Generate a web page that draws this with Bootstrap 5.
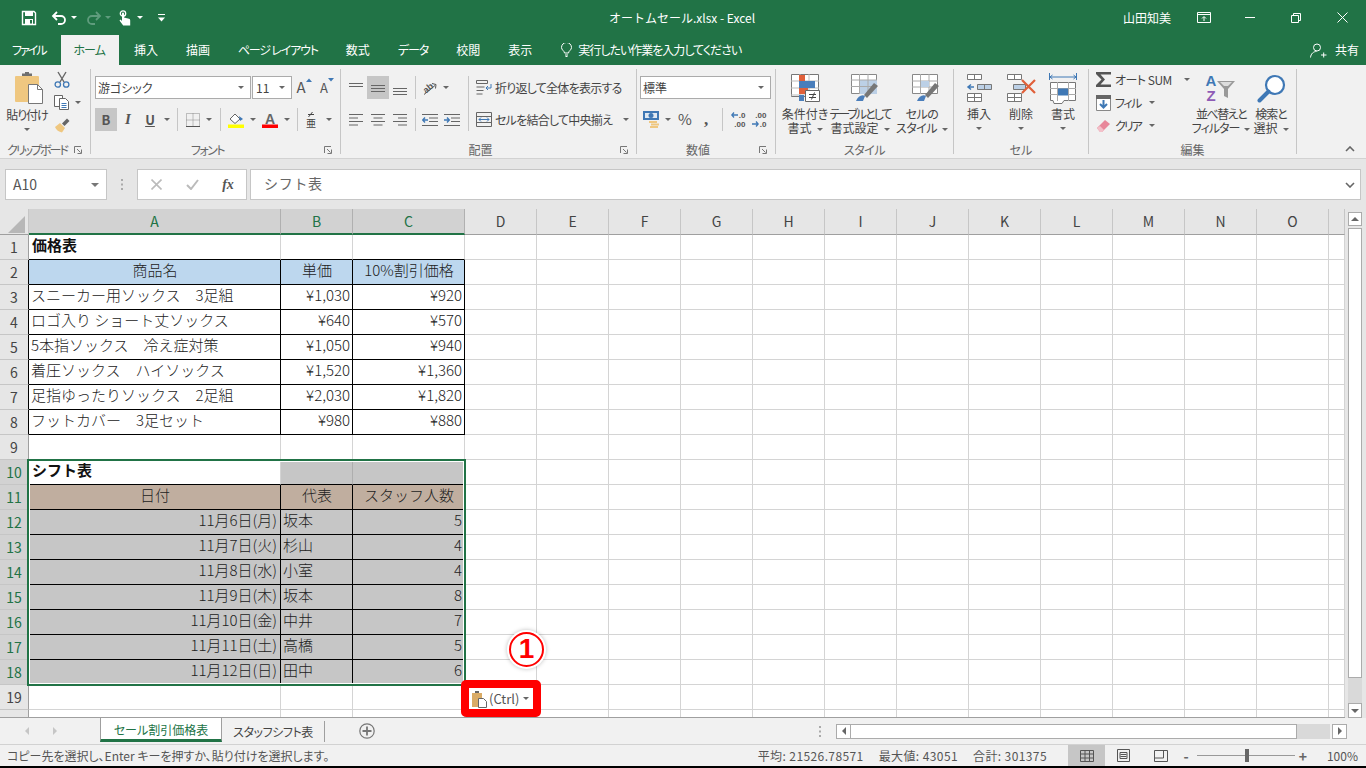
<!DOCTYPE html>
<html lang="ja">
<head>
  <meta charset="UTF-8" />
  <title>オートムセール.xlsx - Excel</title>
  <link href="https://cdn.jsdelivr.net/npm/bootstrap@5.3.3/dist/css/bootstrap.min.css" rel="stylesheet">
  <style>
    html, body { height: 100%; overflow: hidden; }
    body { font-family: "Noto Sans CJK JP", "Noto Sans", sans-serif; font-size: 12px; color: #444; background: #000; }
    svg { display: block; flex: none; }
    .palt { font-feature-settings: "palt"; }
    .ls05 { letter-spacing: -.5px; } .ls07 { letter-spacing: -.75px; } .ls1 { letter-spacing: -1px; }
    .ls12 { letter-spacing: -1.2px; } .ls15 { letter-spacing: -1.5px; } .ls2 { letter-spacing: -2px; }
    .xl-app { height: 766px; width: 1366px; }

    /* title bar + tabs */
    .xl-title { height: 35px; background: #217346; color: #fff; }
    .xl-title > * { flex: none; }
    .qat { width: 560px; padding-left: 20px; }
    .qm3 { margin-left: 3px; } .qm4 { margin-left: 4px; } .qm5 { margin-left: 5px; } .qm7 { margin-left: 7px; }
    .qm9 { margin-left: 9px; } .qm13 { margin-left: 13px; } .qm15 { margin-left: 15px; }
    .doc-name { width: 244px; text-align: center; font-size: 12px; }
    .user-name { margin-left: 319px; width: 48px; font-size: 12px; white-space: nowrap; }
    .win-btn { width: 46px; }
    .win-btn-first { margin-left: 16px; width: 34px; }
    .win-min { margin-left: 6px; }
    .xl-tabs { height: 30px; background: #217346; color: #fff; font-size: 12px; }
    .rtab { padding: 0 14px; line-height: 30px; white-space: nowrap; }
    .rtab-file { padding: 0 12px; margin-right: 3px; }
    .rtab-home { background: #f1f1f1; color: #217346; padding: 0 14px 0 13px; margin-right: 1px; }
    .tell-me { margin-left: 15px; }
    .tell-me svg { margin-right: 6px; }
    .share { margin-left: auto; padding-right: 7px; }

    /* ribbon */
    .ribbon { height: 93px; background: #f1f1f1; }
    .rsep { width: 1px; background: #c6c6c6; margin: 4px 0; flex: none; }
    .rg { flex: none; display: flex; flex-direction: column; height: 93px; }
    .rg-body { height: 77px; flex: none; display: flex; }
    .rg-tools { padding-top: 11px; }
    .rg-label { height: 16px; line-height: 16px; display: flex; color: #666; }
    .rg-label span { flex: 1; text-align: center; }
    .launch { width: 16px; display: flex; align-items: center; }
    .g-clip { width: 90px; } .g-font { width: 249px; } .g-align { width: 295px; } .g-num { width: 138px; }
    .g-style { width: 177px; } .g-cells { width: 134px; } .g-edit { width: 207px; }
    .num-pad { padding-left: 3px; }
    .tr { display: flex; height: 23px; align-items: center; }
    .tr + .tr { margin-top: 9px; }
    .ti { flex: none; display: flex; align-items: center; justify-content: center; height: 23px; }
    .ti-on { background: #c6c6c6; }
    .w8 { width: 8px; } .w10 { width: 10px; } .w11 { width: 11px; } .w12 { width: 12px; } .w14 { width: 14px; }
    .w18 { width: 18px; } .w20 { width: 20px; } .w22 { width: 22px; } .w24 { width: 24px; } .w25 { width: 25px; }
    .tcaret { width: 0; height: 0; border: 3px solid transparent; border-top: 3px solid #666; border-bottom: 0; flex: none; }
    .tcaret-w { border-top-color: #fff; }
    .tcaret-d { border-top-color: #5f9c7d; }
    .tc-lg { border-width: 4px; border-bottom: 0; border-top-color: #777; }
    .vs::after { content: ""; width: 1px; height: 23px; background: #c6c6c6; }
    .cbox { background: #fff; border: 1px solid #ababab; height: 23px; display: flex; align-items: center; justify-content: space-between; padding: 0 6px 0 2px; flex: none; }
    .cb-font { width: 156px; } .cb-size { width: 40px; margin-left: 1px; padding-left: 3px; } .cb-num { width: 131px; padding-left: 2px; }
    .t-bold { font-weight: 700; font-size: 13px; color: #555; }
    .t-it { font-style: italic; font-family: "Liberation Serif", serif; font-weight: 700; font-size: 15px; color: #555; }
    .t-un { text-decoration: underline; font-weight: 700; font-size: 13px; color: #555; }
    .t-big { font-size: 15px; color: #555; }
    .small-a { font-size: 13px; }
    .t-pct { font-size: 15px; color: #555; }
    .t-comma { font-family: "Liberation Serif", serif; font-weight: 700; font-size: 17px; color: #555; line-height: 1; }
    .deci { font-size: 8px; line-height: 9px; color: #555; font-family: "Liberation Sans", sans-serif; font-weight: 700; }
    .deci-ln { display: flex; align-items: center; justify-content: flex-end; gap: 1px; }
    .col-left { width: 123px; flex: none; }
    .mid-line { width: 1px; height: 55px; background: #c6c6c6; flex: none; }
    .col-wrap { padding-left: 7px; }
    .col-wrap .ti { gap: 3px; justify-content: flex-start; }
    .col-wrap .tcaret { margin-left: 8px; }
    .paste-col { width: 54px; flex: none; padding-top: 7px; display: flex; flex-direction: column; align-items: center; }
    .paste-ic { margin: 0 0 4px 4px; }
    .lbl { line-height: 14px; white-space: nowrap; text-align: center; }
    .lbl .tcaret { display: inline-block; vertical-align: middle; margin-left: 5px; }
    .bigb { flex: none; padding-top: 6px; display: flex; flex-direction: column; align-items: center; }
    .bigb-ic { height: 34px; display: flex; align-items: center; justify-content: center; margin-bottom: 2px; }
    .ic-r10 { margin-left: 10px; } .ic-r8 { margin-left: 8px; }
    .big58 { width: 58px; } .big52 { width: 52px; } .big72 { width: 72px; } .big42 { width: 42px; } .big50 { width: 50px; }
    .big-caret { display: flex; align-items: center; gap: 5px; height: 14px; }
    .small-col { padding-top: 3px; }
    .small-row { display: flex; align-items: center; height: 23px; }
    .cm6 { margin-left: 6px; }
    .edit-col { width: 107px; flex: none; padding: 3px 0 0 7px; }
    .edit-row { display: flex; align-items: center; height: 23px; gap: 4px; }
    .edit-row .tcaret { margin-left: 4px; }
    .collapse-arrow { margin: 81px 0 0 48px; }

    /* formula bar */
    .fbar { height: 51px; background: #e6e6e6; border-top: 1px solid #d2d2d2; padding: 10px 5px 9px; }
    .fbox { background: #fff; border: 1px solid #c6c6c6; height: 31px; display: flex; align-items: center; }
    .name-box { width: 102px; padding: 0 7px; justify-content: space-between; font-size: 14px; color: #555; }
    .fdots { width: 30px; display: flex; justify-content: center; }
    .fn-btns { width: 110px; }
    .fn-btns > * { width: 36px; display: flex; justify-content: center; }
    .fx { font-family: "Liberation Serif", serif; font-style: italic; font-weight: 700; font-size: 14px; color: #555; }
    .fn-input { flex: 1; margin-left: 3px; padding: 0 5px 0 13px; font-size: 14px; color: #666; justify-content: space-between; letter-spacing: .7px; }
    .fn-input span { padding-bottom: 3px; }

    /* sheet */
    .sheet-area { height: 509px; position: relative; overflow: hidden; background: #e6e6e6; }
    .sheet-scroll { width: 1345px; height: 509px; overflow: hidden; background: #fff; border-bottom: 1px solid #9f9f9f; flex: none; }
    .xl-grid { table-layout: fixed; border-collapse: separate; border-spacing: 0; width: 1345px; font-size: 15px; color: #222; }
    .xl-grid th, .xl-grid td { box-sizing: border-box; height: 25px; padding: 0 1px 4px 2px; line-height: 20px; font-weight: 300; white-space: nowrap; overflow: hidden; vertical-align: middle;
      border-right: 1px solid #d4d4d4; border-bottom: 1px solid #d4d4d4; }
    .xl-grid td.text-end { padding-right: 2px; }
    .xl-grid td.dt { padding-right: 3px; }
    .xl-grid tr.colhead th { height: 26px; background: #e6e6e6; color: #444; text-align: center; font-size: 14px; border-right-color: #c6c6c6; border-bottom-color: #9f9f9f; padding: 0; line-height: 23px; font-weight: 400; }
    .xl-grid th.corner { width: 29px; padding: 0; }
    .corner-tri { width: 0; height: 0; border-left: 17px solid transparent; border-bottom: 17px solid #b7b7b7; margin: 5px 0 0 8px; }
    .xl-grid tr.colhead th.ch-on { background: #d2d2d2; color: #217346; border-right-color: #b0b0b0; border-bottom: 2px solid #217346; }
    .cw-a { width: 252px; } .cw-b { width: 72px; } .cw-c { width: 112px; } .cw-n { width: 72px; } .cw-p { width: 16px; }
    .xl-grid .rh { background: #e6e6e6; text-align: center; font-size: 14px; color: #444; padding: 0; line-height: 23px; font-weight: 400; border-right-color: #9f9f9f; border-bottom-color: #c6c6c6; }
    .xl-grid .rh-on { background: #d2d2d2; color: #217346; }
    .xl-grid .rh-edge { border-right-color: #000; }
    .xl-grid td.rest { background: repeating-linear-gradient(90deg, transparent 0 71px, #d4d4d4 71px 72px); border-right: 1px solid #d4d4d4; padding: 0; }
    .xl-grid .bk { border-right-color: #000; border-bottom-color: #000; }
    .xl-grid .bk-b { border-bottom-color: #000; }
    .bg-hd1 { background: #bdd7ee; }
    .bg-hd2 { background: #c0ae9f; }
    .bg-sel { background: #c6c6c6; }
    .xl-grid td.sel-line { border-right-color: #aeaeae; border-bottom-color: #000; }
    .xl-grid td.tb { font-weight: 700; color: #111; padding-left: 3px; }
    .sel-box { position: absolute; left: 27px; top: 250px; width: 439px; height: 227px; border: 2px solid #217346; box-shadow: inset 0 0 0 1px #fff; pointer-events: none; }
    .paste-btn { position: absolute; left: 461px; top: 471px; width: 80px; height: 37px; background: #fff; border: 8px solid #f00; border-radius: 5px; display: flex; align-items: center; gap: 2px; padding: 0 0 0 3px; font-size: 13px; color: #555; }
    .paste-btn .tcaret { margin-left: 2px; }
    .step-mark { position: absolute; left: 507px; top: 421px; width: 39px; height: 39px; border-radius: 50%; background: #fff; box-shadow: 0 0 4px rgba(0,0,0,.25); display: flex; align-items: center; justify-content: center; }
    .step-in { width: 35px; height: 35px; border-radius: 50%; border: 2px solid #f00; color: #f00; font-family: "Liberation Sans", sans-serif; font-weight: 700; font-size: 28px; line-height: 30px; text-align: center; }
    .vscroll { width: 21px; height: 509px; background: #e6e6e6; padding: 3px 4px 0 3px; flex: none; }
    .vs-btn { height: 14px; background: #fff; border: 1px solid #ababab; display: flex; align-items: center; justify-content: center; }
    .vs-thumb { height: 450px; background: #fff; border: 1px solid #ababab; margin-top: 2px; }
    .vs-rest { height: 25px; background: #d9d9d9; }
    .vs-end { height: 15px; }
    .tri-up { width: 0; height: 0; border: 4px solid transparent; border-bottom: 4px solid #666; border-top: 0; }
    .tri-dn { width: 0; height: 0; border: 4px solid transparent; border-top: 4px solid #666; border-bottom: 0; }
    .tri-l { width: 0; height: 0; border: 4px solid transparent; border-right: 4px solid #666; border-left: 0; }
    .tri-r { width: 0; height: 0; border: 4px solid transparent; border-left: 4px solid #666; border-right: 0; }

    /* sheet tabs */
    .stabs { height: 27px; background: #f1f1f1; border-bottom: 1px solid #d2d2d2; }
    .stab-nav { width: 100px; padding-left: 25px; gap: 24px; }
    .stab-nav .tri-l { border-right-color: #c6c6c6; } .stab-nav .tri-r { border-left-color: #c6c6c6; }
    .stab-on { width: 122px; height: 24px; align-self: flex-start; background: #fff; color: #217346; border: 1px solid #9f9f9f; border-top: 0; border-bottom: 3px solid #217346; text-align: center; line-height: 23px; }
    .stab-off { width: 103px; text-align: center; border-right: 1px solid #9f9f9f; height: 21px; line-height: 21px; letter-spacing: -.4px; }
    .stab-add { margin-left: 34px; }
    .dots-h { margin-left: 435px; margin-right: 6px; width: 20px; }
    .hscroll { width: 511px; height: 15px; background: #d9d9d9; }
    .hs-btn { width: 15px; height: 15px; background: #fff; border: 1px solid #ababab; display: flex; align-items: center; justify-content: center; flex: none; }
    .hs-thumb { width: 446px; height: 15px; background: #fff; border: 1px solid #ababab; border-left: 0; }
    .hs-track { width: 33px; }
    .hs-gap { width: 2px; background: #f1f1f1; height: 15px; }

    /* status bar */
    .sbar { height: 21px; background: #f1f1f1; padding-left: 7px; font-size: 12px; color: #555; }
    .stat-right { margin-left: auto; }
    .stat-t { letter-spacing: .4px; }
    .stat-v { margin-left: 15px; }
    .view-btn { width: 37px; height: 21px; display: flex; align-items: center; justify-content: center; }
    .view-on { background: #c6c6c6; margin-left: 21px; }
    .zoom-track { width: 98px; height: 1px; background: #999; position: relative; margin: 0 1px 0 4px; }
    .zoom-thumb { position: absolute; left: 48px; top: -6px; width: 4px; height: 13px; background: #666; }
    .zoom-val { width: 49px; text-align: right; padding-right: 8px; margin-left: 7px; }
    .sgn { width: 14px; text-align: center; font-weight: 700; font-size: 14px; color: #666; line-height: 1; }
  </style>
</head>
<body>
<div class="xl-app d-flex flex-column">

  <!-- title bar -->
  <div class="xl-title d-flex align-items-center">
    <div class="qat d-flex align-items-center">
      <svg width="18" height="16" viewBox="0 0 16 16" fill="none" stroke="#fff"><path d="M1.5 1.5h11.5l1.5 1.5v11.5h-13z" stroke-width="1.4"/><path d="M4 2h8v4H4z" fill="#fff" stroke="none"/><path d="M4 9h8v5.5H4z" fill="#fff" stroke="none"/><path d="M9 10h2v3.5H9z" fill="#217346" stroke="none"/></svg>
      <svg class="qm13" width="16" height="14" viewBox="0 0 16 14" fill="none" stroke="#fff" stroke-width="1.8"><path d="M6 1L2 5l4 4M2 5h8a4 4 0 0 1 0 8H7"/></svg>
      <span class="tcaret qm4 tcaret-w"></span>
      <svg class="qm9" width="16" height="14" viewBox="0 0 16 14" fill="none" stroke="#5f9c7d" stroke-width="1.8"><path d="M10 1l4 4-4 4M14 5H6a4 4 0 0 0 0 8h3"/></svg>
      <span class="tcaret qm3 tcaret-d"></span>
      <svg class="qm7" width="14" height="16" viewBox="0 0 14 16" fill="#fff"><circle cx="5" cy="3.5" r="2.7" fill="none" stroke="#fff" stroke-width="1.3"/><path d="M4 3.5a1 1 0 0 1 2 0v4l5 1.2a1.5 1.5 0 0 1 1.2 1.5V15.5H5.2L1.5 10.5l1-1L4 11z"/></svg>
      <span class="tcaret qm5 tcaret-w"></span>
      <svg class="qm15" width="7" height="8" viewBox="0 0 7 8" fill="#fff"><path d="M0 0h7v1H0zM0 3.5h7L3.5 7.5z"/></svg>
    </div>
    <div class="doc-name">オートムセール.xlsx - Excel</div>
    <div class="user-name">山田知美</div>
    <div class="win-btn win-btn-first d-flex justify-content-center">
      <svg width="14" height="11" viewBox="0 0 14 11" fill="none" stroke="#fff"><path d="M.5.500h13v10H.500zM.5 2.500h13M7 9V5M5 6.500L7 4.500l2 2"/></svg>
    </div>
    <div class="win-btn win-min d-flex justify-content-center"><svg width="10" height="2" viewBox="0 0 10 2"><path d="M0 .5h10" stroke="#fff"/></svg></div>
    <div class="win-btn d-flex justify-content-center"><svg width="10" height="10" viewBox="0 0 10 10" fill="none" stroke="#fff"><path d="M.5 2.500h7v7h-7zM2.500 2.500v-2h7v7h-2"/></svg></div>
    <div class="win-btn d-flex justify-content-center"><svg width="11" height="11" viewBox="0 0 11 11" fill="none" stroke="#fff"><path d="M.5.500l10 10M10.500.500l-10 10"/></svg></div>
  </div>

  <!-- ribbon tabs -->
  <div class="xl-tabs d-flex palt">
    <div class="rtab rtab-file ls2">ファイル</div>
    <div class="rtab rtab-home ls1">ホーム</div>
    <div class="rtab">挿入</div>
    <div class="rtab">描画</div>
    <div class="rtab ls12">ページ レイアウト</div>
    <div class="rtab">数式</div>
    <div class="rtab ls1">データ</div>
    <div class="rtab">校閲</div>
    <div class="rtab">表示</div>
    <div class="tell-me d-flex align-items-center">
      <svg width="11" height="14" viewBox="0 0 11 14" fill="none" stroke="#fff"><path d="M3.5 10c0-2-3-3-3-5.500a5 5 0 0 1 10 0c0 2.500-3 3.500-3 5.500zM4 12h3M4.500 13.500h2"/></svg>
      <span class="ls1">実行したい作業を入力してください</span>
    </div>
    <div class="share d-flex align-items-center gap-1">
      <svg width="17" height="15" viewBox="0 0 17 15" fill="none" stroke="#fff"><circle cx="7" cy="4.500" r="3.500"/><path d="M.5 14.500c.5-4 3-6 6-6M11 12h5.500M13.700 9.500v5"/></svg>
      <span class="ms-1">共有</span>
    </div>
  </div>

  <!-- ribbon -->
  <div class="ribbon d-flex palt">

    <div class="rg g-clip">
      <div class="rg-body">
        <div class="paste-col">
          <svg class="paste-ic" width="30" height="32" viewBox="0 0 30 32"><rect x="1" y="4" width="24" height="26" rx="1" fill="#efc780"/><path d="M8 4h10V1.500h-3V0h-4v1.500H8z" fill="#6f6f6f"/><path d="M14.500 12.500h9l5 5v14h-14z" fill="#fff" stroke="#777"/><path d="M23.500 12.500v5h5" fill="none" stroke="#777"/></svg>
          <div class="lbl ls1">貼り付け</div>
          <div class="ti w22 big-caret"><span class="tcaret"></span></div>
        </div>
        <div class="small-col">
          <div class="small-row">
            <svg width="16" height="17" viewBox="0 0 16 17" fill="none"><path d="M4 1l6 10M12 1L6 11" stroke="#666" stroke-width="1.400"/><circle cx="3.800" cy="13.500" r="2.700" stroke="#3f78b5" stroke-width="1.300"/><circle cx="12.200" cy="13.500" r="2.700" stroke="#3f78b5" stroke-width="1.300"/></svg>
          </div>
          <div class="small-row">
            <svg width="15" height="15" viewBox="0 0 15 15" fill="#fff" stroke="#666"><path d="M.5.500h8v11h-8z"/><path d="M5.500 3.500h6l3 3v8h-9z"/><path d="M7.500 8.500h5M7.500 10.500h5M7.500 12.500h5" stroke="#3f78b5"/></svg>
            <span class="tcaret cm6"></span>
          </div>
          <div class="small-row">
            <svg width="16" height="15" viewBox="0 0 16 15"><path d="M1 9l5-4 5 5-3 4.500C5 14 2 12 1 9z" fill="#efc780"/><path d="M8 5.500L13 .5l2.500 2.500-5 5z" fill="#666"/></svg>
          </div>
        </div>
      </div>
      <div class="rg-label"><span class="ls2">クリップボード</span><div class="launch"><svg width="8" height="8" viewBox="0 0 8 8" fill="none" stroke="#777"><path d="M.5 7V.5H7M3 3l3.500 3.500M3.500 7.500h4v-4" /></svg></div></div>
    </div>
    <div class="rsep"></div>

    <div class="rg g-font">
      <div class="rg-body rg-tools ps-1 d-block">
        <div class="tr">
          <div class="cbox cb-font"><span>游ゴシック</span><span class="tcaret"></span></div>
          <div class="cbox cb-size"><span>11</span><span class="tcaret"></span></div>
          <div class="ti w24"><span class="t-big">A</span><svg width="6" height="4" viewBox="0 0 6 4" class="mb-3"><path d="M0 4l3-3.500L6 4z" fill="#3f78b5"/></svg></div>
          <div class="ti w22"><span class="t-big small-a">A</span><svg width="6" height="4" viewBox="0 0 6 4" class="mb-3"><path d="M0 0l3 3.500L6 0z" fill="#3f78b5"/></svg></div>
        </div>
        <div class="tr">
          <div class="ti w22 ti-on t-bold">B</div>
          <div class="ti w22 t-it">I</div>
          <div class="ti w22 t-un">U</div>
          <div class="ti w11"><span class="tcaret"></span></div>
          <div class="ti w11 vs"></div>
          <div class="ti w20"><svg width="14" height="14" viewBox="0 0 14 14" fill="none" stroke="#888" stroke-dasharray="1 1"><path d="M.5.500h13v13H.500zM.5 7h13M7 .5v13"/><path d="M0 13.500h14" stroke="#555" stroke-dasharray="none"/></svg></div>
          <div class="ti w12"><span class="tcaret"></span></div>
          <div class="ti w10 vs"></div>
          <div class="ti w22"><svg width="17" height="16" viewBox="0 0 17 16"><path d="M2 7l5-5 5 5-5 4.500z" fill="#fff" stroke="#666"/><path d="M11 4l4 3-3 2z" fill="#3f78b5"/><path d="M0 12.500h16V16H0z" fill="#ff0"/></svg></div>
          <div class="ti w11"><span class="tcaret"></span></div>
          <div class="ti w24"><svg width="16" height="16" viewBox="0 0 16 16"><text x="8" y="11.500" text-anchor="middle" font-size="14" font-weight="700" font-family="Liberation Sans" fill="#666">A</text><path d="M0 12.500h16V16H0z" fill="#f00"/></svg></div>
          <div class="ti w10"><span class="tcaret"></span></div>
          <div class="ti w10 vs"></div>
          <div class="ti w18"><svg width="12" height="22" viewBox="0 0 12 22"><path d="M3 5.500h6M7.500 3l-4 5" stroke="#444" fill="none"/><text x="6" y="17.500" text-anchor="middle" font-size="10" fill="#444" font-family="Noto Sans CJK JP">亜</text></svg></div>
          <div class="ti w18"><span class="tcaret"></span></div>
        </div>
      </div>
      <div class="rg-label"><span class="ls15">フォント</span><div class="launch"><svg width="8" height="8" viewBox="0 0 8 8" fill="none" stroke="#777"><path d="M.5 7V.5H7M3 3l3.500 3.500M3.500 7.500h4v-4"/></svg></div></div>
    </div>
    <div class="rsep"></div>

    <div class="rg g-align">
      <div class="rg-body rg-tools ps-1">
        <div class="col-left">
          <div class="tr">
            <div class="ti w22"><svg width="14" height="14" viewBox="0 0 14 14" stroke="#666"><path d="M0 2.500h14M0 5.500h14"/></svg></div>
            <div class="ti w22 ti-on"><svg width="14" height="14" viewBox="0 0 14 14" stroke="#666"><path d="M0 4.500h14M0 7.500h14M0 10.500h14"/></svg></div>
            <div class="ti w22"><svg width="14" height="14" viewBox="0 0 14 14" stroke="#666"><path d="M0 7.500h14M0 10.500h14M0 13.500h14"/></svg></div>
            <div class="ti w8 vs"></div>
            <div class="ti w22"><svg width="18" height="16" viewBox="0 0 18 16"><text x="7" y="11" text-anchor="middle" font-size="9" font-weight="700" fill="#555" font-family="Liberation Sans" transform="rotate(-40 7 8)">ab</text><path d="M3 14.500l11-9M11 3.500l4 1-.5 4" fill="none" stroke="#555"/></svg></div>
            <div class="ti w10"><span class="tcaret"></span></div>
          </div>
          <div class="tr">
            <div class="ti w22"><svg width="14" height="12" viewBox="0 0 14 12" stroke="#666"><path d="M0 .5h14M0 4h9M0 7.500h14M0 11h9"/></svg></div>
            <div class="ti w22"><svg width="14" height="12" viewBox="0 0 14 12" stroke="#666"><path d="M0 .5h14M2.500 4h9M0 7.500h14M2.500 11h9"/></svg></div>
            <div class="ti w22"><svg width="14" height="12" viewBox="0 0 14 12" stroke="#666"><path d="M0 .5h14M5 4h9M0 7.500h14M5 11h9"/></svg></div>
            <div class="ti w8 vs"></div>
            <div class="ti w22"><svg width="16" height="12" viewBox="0 0 16 12" fill="none" stroke="#666"><path d="M0 .5h16M7 4h9M7 7.500h9M0 11.500h16"/><path d="M6 6H1M3 3.500L.7 6 3 8.500" stroke="#3f78b5" stroke-width="1.400"/></svg></div>
            <div class="ti w22"><svg width="16" height="12" viewBox="0 0 16 12" fill="none" stroke="#666"><path d="M0 .5h16M7 4h9M7 7.500h9M0 11.500h16"/><path d="M0 6h5M3 3.500L5.300 6 3 8.500" stroke="#3f78b5" stroke-width="1.400"/></svg></div>
          </div>
        </div>
        <div class="mid-line"></div>
        <div class="col-wrap">
          <div class="tr">
            <div class="ti"><svg width="16" height="15" viewBox="0 0 16 15" fill="none" stroke="#666"><path d="M.5.500h11v3H.500zM.5 7h8M.5 10.500h7M.5 14h6"/><path d="M15 4v4h-5M12 6l-2 2 2 2" stroke="#3f78b5"/></svg><span class="ls07">折り返して全体を表示する</span></div>
          </div>
          <div class="tr">
            <div class="ti"><svg width="16" height="15" viewBox="0 0 16 15" fill="none" stroke="#666"><path d="M.5.500h15v14H.500zM.5 4.500h15M.5 10.500h15"/><path d="M3 7.500h10M5 5.500l-2 2 2 2M11 5.500l2 2-2 2" stroke="#3f78b5"/></svg><span class="ls07">セルを結合して中央揃え</span><span class="tcaret"></span></div>
          </div>
        </div>
      </div>
      <div class="rg-label"><span>配置</span><div class="launch"><svg width="8" height="8" viewBox="0 0 8 8" fill="none" stroke="#777"><path d="M.5 7V.5H7M3 3l3.500 3.500M3.500 7.500h4v-4"/></svg></div></div>
    </div>
    <div class="rsep"></div>

    <div class="rg g-num">
      <div class="rg-body rg-tools d-block num-pad">
        <div class="tr">
          <div class="cbox cb-num"><span>標準</span><span class="tcaret"></span></div>
        </div>
        <div class="tr">
          <div class="ti w22"><svg width="17" height="17" viewBox="0 0 17 17"><path d="M0 0h16v9H0z" fill="#3f78b5"/><path d="M2 2h12v5H2z" fill="#dfe9f3"/><ellipse cx="8" cy="4.500" rx="2.500" ry="2.500" fill="#3f78b5"/><path d="M6 10h8v2H6zM8 12.500h8v2H8zM7 15h8v2H7z" fill="#efc780"/></svg></div>
          <div class="ti w11"><span class="tcaret"></span></div>
          <div class="ti w24 t-pct">%</div>
          <div class="ti w18 t-comma">,</div>
          <div class="ti w14 vs"></div>
          <div class="ti w18 deci"><div>
            <div class="deci-ln"><svg width="7" height="6" viewBox="0 0 7 6" fill="none" stroke="#3f78b5" stroke-width="1.300"><path d="M7 3H1M3 .5L.8 3 3 5.500"/></svg>.0</div><div class="deci-ln">.00</div>
          </div></div>
          <div class="ti w24 deci"><div>
            <div class="deci-ln">.00</div><div class="deci-ln"><svg width="7" height="6" viewBox="0 0 7 6" fill="none" stroke="#3f78b5" stroke-width="1.300"><path d="M0 3h6M4 .5L6.200 3 4 5.500"/></svg>.0</div>
          </div></div>
        </div>
      </div>
      <div class="rg-label"><span>数値</span><div class="launch"><svg width="8" height="8" viewBox="0 0 8 8" fill="none" stroke="#777"><path d="M.5 7V.5H7M3 3l3.500 3.500M3.500 7.500h4v-4"/></svg></div></div>
    </div>
    <div class="rsep"></div>

    <div class="rg g-style">
      <div class="rg-body">
        <div class="bigb big58">
          <div class="bigb-ic"><svg width="30" height="30" viewBox="0 0 30 30"><path d="M1.500 1.500h27v22h-27z" fill="#fff" stroke="#777"/><path d="M1 8h28M1 15h28M1 22h28M10 1v23M19 1v23" stroke="#bbb"/><path d="M9 2h6v6H9z" fill="#e0603a"/><path d="M9 8h16v7H9z" fill="#4a7ebb"/><path d="M9 15h9v6H9z" fill="#e0603a"/><path d="M9 22h5v6H9z" fill="#4a7ebb"/><path d="M15.500 17.500h14v11h-14z" fill="#fff" stroke="#666"/><path d="M19 21.500h7M19 24.500h7M24.500 19.500l-3 7" stroke="#444" fill="none"/></svg></div>
          <div class="lbl">条件付き<br>書式<span class="tcaret"></span></div>
        </div>
        <div class="bigb big52">
          <div class="bigb-ic ic-r10"><svg width="30" height="30" viewBox="0 0 30 30"><path d="M1.500 1.500h25v19h-25z" fill="#fff" stroke="#888"/><path d="M10 7h17v14H10z" fill="#bcd0e6"/><path d="M1 7h26M1 13.500h26M9.500 1v20M18 1v20" stroke="#aaa"/><path d="M6 28c2-5 6-7 9-5l-2 5z" fill="#4a7ebb"/><path d="M14 22l10-12 4 3-11 12z" fill="#777"/></svg></div>
          <div class="lbl"><span class="ls2">テーブルとして</span><br>書式設定<span class="tcaret"></span></div>
        </div>
        <div class="bigb big72">
          <div class="bigb-ic ic-r8"><svg width="30" height="30" viewBox="0 0 30 30"><path d="M1.500 1.500h25v19h-25z" fill="#fff" stroke="#888"/><path d="M1 8h26M1 14h26M9.500 1v20M18 1v20" stroke="#aaa"/><path d="M10 8h8v6h-8z" fill="#bcd0e6"/><path d="M6 28c2-5 6-7 9-5l-2 5z" fill="#4a7ebb"/><path d="M14 22l10-12 4 3-11 12z" fill="#777"/></svg></div>
          <div class="lbl ls05">セルの<br>スタイル<span class="tcaret"></span></div>
        </div>
      </div>
      <div class="rg-label"><span class="ls05">スタイル</span></div>
    </div>
    <div class="rsep"></div>

    <div class="rg g-cells">
      <div class="rg-body ps-1">
        <div class="bigb big42">
          <div class="bigb-ic"><svg width="26" height="28" viewBox="0 0 26 28" fill="#fff" stroke="#777"><path d="M1.500.5h14v5h-14zM8.500.5v5M1.500 19.500h14v8h-14zM1.500 23.500h14M8.500 19.500v8"/><path d="M11.500 10.500h14v5h-14z" fill="#bcd0e6"/><path d="M18.500 10.500v5" /><path d="M8 13H2M5 10.500L2 13l3 2.500" fill="none" stroke="#3f78b5" stroke-width="1.500"/></svg></div>
          <div class="lbl">挿入</div>
          <div class="big-caret"><span class="tcaret"></span></div>
        </div>
        <div class="bigb big42">
          <div class="bigb-ic"><svg width="30" height="28" viewBox="0 0 30 28" fill="#fff" stroke="#777"><path d="M1.500.5h14v5h-14zM8.500.5v5M1.500 19.500h14v8h-14zM1.500 23.500h14M8.500 19.500v8"/><path d="M7.500 10.500h12v5h-12z" fill="#bcd0e6"/><path d="M16 6l13 13M29 6L16 19" fill="none" stroke="#e0603a" stroke-width="2.200"/></svg></div>
          <div class="lbl">削除</div>
          <div class="big-caret"><span class="tcaret"></span></div>
        </div>
        <div class="bigb big42">
          <div class="bigb-ic"><svg width="28" height="31" viewBox="0 0 28 31" fill="none"><path d="M1 4h26M3.500 2L1 4l2.500 2M24.500 2L27 4l-2.500 2M.5 0v7M27.500 0v7" stroke="#3f78b5"/><path d="M1.500 9.500h25v18H15l-2 3H5l-1-3H1.500z" fill="#fff" stroke="#777"/><path d="M1 15.500h26M1 21.500h26M8.500 9v19M19.500 9v19" stroke="#aaa"/><path d="M9 15.500h10v7H9z" fill="#3f78b5"/></svg></div>
          <div class="lbl">書式</div>
          <div class="big-caret"><span class="tcaret"></span></div>
        </div>
      </div>
      <div class="rg-label"><span>セル</span></div>
    </div>
    <div class="rsep"></div>

    <div class="rg g-edit">
      <div class="rg-body">
        <div class="edit-col">
          <div class="edit-row">
            <svg width="15" height="15" viewBox="0 0 15 15"><path d="M0 0h15v2.500H4.500L9 7.500 4.500 12.500H15V15H0v-2l5.500-5.500L0 2z" fill="#555"/></svg>
            <span class="ls05">オート SUM</span><span class="tcaret ms-2"></span>
          </div>
          <div class="edit-row">
            <svg width="15" height="16" viewBox="0 0 15 16"><path d="M.5.500h14v15H.500z" fill="#fff" stroke="#888"/><path d="M0 0h15v4H0z" fill="#666"/><path d="M7.500 5v7M4 9l3.500 3.500L11 9" fill="none" stroke="#3f78b5" stroke-width="2"/></svg>
            <span class="ls15">フィル</span><span class="tcaret"></span>
          </div>
          <div class="edit-row">
            <svg width="15" height="14" viewBox="0 0 15 14"><path d="M1 9l8-8 5 4-8 8H4z" fill="#e8879a"/><path d="M1 9l3 4h2l2-2-4-4z" fill="#f3c0c9"/></svg>
            <span class="ls2">クリア</span><span class="tcaret"></span>
          </div>
        </div>
        <div class="bigb big50">
          <div class="bigb-ic"><svg width="32" height="30" viewBox="0 0 32 30"><text x="6" y="13" text-anchor="middle" font-size="15" font-weight="700" font-family="Liberation Sans" fill="#3f78b5">A</text><text x="6" y="28" text-anchor="middle" font-size="15" font-weight="700" font-family="Liberation Sans" fill="#8e5bb5">Z</text><path d="M12 8h18l-7 8v9l-4-2v-7z" fill="#999"/><path d="M15 9h12l-4 4h-4z" fill="#ddd"/></svg></div>
          <div class="lbl"><span class="ls15">並べ替えと</span><br><span class="ls1">フィルター</span><span class="tcaret"></span></div>
        </div>
        <div class="bigb big50">
          <div class="bigb-ic"><svg width="29" height="29" viewBox="0 0 29 29" fill="none"><circle cx="18" cy="11" r="9" stroke="#3f78b5" stroke-width="2.200" fill="#fff"/><path d="M11.500 17.500L2.500 26.500" stroke="#3f78b5" stroke-width="4" stroke-linecap="round"/></svg></div>
          <div class="lbl"><span class="ls1">検索と</span><br>選択<span class="tcaret"></span></div>
        </div>
      </div>
      <div class="rg-label"><span>編集</span></div>
    </div>
    <div class="rsep"></div>
    <div class="collapse-arrow"><svg width="10" height="6" viewBox="0 0 10 6" fill="none" stroke="#666" stroke-width="1.600"><path d="M1 5l4-4 4 4"/></svg></div>
  </div>

  <!-- formula bar -->
  <div class="fbar d-flex">
    <div class="fbox name-box"><span>A10</span><span class="tcaret tc-lg"></span></div>
    <div class="fdots align-items-center"><svg width="2" height="11" viewBox="0 0 2 11" fill="#aaa"><path d="M0 0h2v2H0zM0 4.500h2v2H0zM0 9h2v2H0z"/></svg></div>
    <div class="fbox fn-btns">
      <span><svg width="11" height="11" viewBox="0 0 11 11" stroke="#bbb" stroke-width="1.600"><path d="M.5.500l10 10M10.500.500l-10 10"/></svg></span>
      <span><svg width="13" height="11" viewBox="0 0 13 11" fill="none" stroke="#bbb" stroke-width="2"><path d="M1 6l4 4 7-9"/></svg></span>
      <span class="fx">fx</span>
    </div>
    <div class="fbox fn-input"><span>シフト表</span><svg width="10" height="6" viewBox="0 0 10 6" fill="none" stroke="#666" stroke-width="1.600"><path d="M1 1l4 4 4-4"/></svg></div>
  </div>

  <!-- worksheet -->
  <div class="sheet-area d-flex">
    <div class="sheet-scroll">
      <table class="xl-grid">
        <tr class="colhead">
          <th class="corner"><div class="corner-tri"></div></th>
          <th class="cw-a ch-on">A</th><th class="cw-b ch-on">B</th><th class="cw-c ch-on">C</th>
          <th class="cw-n">D</th><th class="cw-n">E</th><th class="cw-n">F</th><th class="cw-n">G</th><th class="cw-n">H</th><th class="cw-n">I</th>
          <th class="cw-n">J</th><th class="cw-n">K</th><th class="cw-n">L</th><th class="cw-n">M</th><th class="cw-n">N</th><th class="cw-n">O</th><th class="cw-p"></th>
        </tr>
        <tr><th class="rh">1</th><td class="tb bk-b">価格表</td><td class="bk-b"></td><td class="bk-b"></td><td class="rest" colspan="13"></td></tr>
        <tr><th class="rh rh-edge">2</th><td class="bg-hd1 bk text-center">商品名</td><td class="bg-hd1 bk text-center">単価</td><td class="bg-hd1 bk text-center">10%割引価格</td><td class="rest" colspan="13"></td></tr>
        <tr><th class="rh rh-edge">3</th><td class="bk">スニーカー用ソックス　3足組</td><td class="bk text-end">¥1,030</td><td class="bk text-end">¥920</td><td class="rest" colspan="13"></td></tr>
        <tr><th class="rh rh-edge">4</th><td class="bk">ロゴ入り ショート丈ソックス</td><td class="bk text-end">¥640</td><td class="bk text-end">¥570</td><td class="rest" colspan="13"></td></tr>
        <tr><th class="rh rh-edge">5</th><td class="bk">5本指ソックス　冷え症対策</td><td class="bk text-end">¥1,050</td><td class="bk text-end">¥940</td><td class="rest" colspan="13"></td></tr>
        <tr><th class="rh rh-edge">6</th><td class="bk">着圧ソックス　ハイソックス</td><td class="bk text-end">¥1,520</td><td class="bk text-end">¥1,360</td><td class="rest" colspan="13"></td></tr>
        <tr><th class="rh rh-edge">7</th><td class="bk">足指ゆったりソックス　2足組</td><td class="bk text-end">¥2,030</td><td class="bk text-end">¥1,820</td><td class="rest" colspan="13"></td></tr>
        <tr><th class="rh rh-edge">8</th><td class="bk">フットカバー　3足セット</td><td class="bk text-end">¥980</td><td class="bk text-end">¥880</td><td class="rest" colspan="13"></td></tr>
        <tr><th class="rh">9</th><td></td><td></td><td></td><td class="rest" colspan="13"></td></tr>
        <tr><th class="rh rh-on">10</th><td class="tb bk-b">シフト表</td><td class="bg-sel sel-line"></td><td class="bg-sel sel-line"></td><td class="rest" colspan="13"></td></tr>
        <tr><th class="rh rh-on">11</th><td class="bg-hd2 bk text-center">日付</td><td class="bg-hd2 bk text-center">代表</td><td class="bg-hd2 bk text-center">スタッフ人数</td><td class="rest" colspan="13"></td></tr>
        <tr><th class="rh rh-on">12</th><td class="bg-sel bk text-end dt">11月6日(月)</td><td class="bg-sel bk">坂本</td><td class="bg-sel bk text-end">5</td><td class="rest" colspan="13"></td></tr>
        <tr><th class="rh rh-on">13</th><td class="bg-sel bk text-end dt">11月7日(火)</td><td class="bg-sel bk">杉山</td><td class="bg-sel bk text-end">4</td><td class="rest" colspan="13"></td></tr>
        <tr><th class="rh rh-on">14</th><td class="bg-sel bk text-end dt">11月8日(水)</td><td class="bg-sel bk">小室</td><td class="bg-sel bk text-end">4</td><td class="rest" colspan="13"></td></tr>
        <tr><th class="rh rh-on">15</th><td class="bg-sel bk text-end dt">11月9日(木)</td><td class="bg-sel bk">坂本</td><td class="bg-sel bk text-end">8</td><td class="rest" colspan="13"></td></tr>
        <tr><th class="rh rh-on">16</th><td class="bg-sel bk text-end dt">11月10日(金)</td><td class="bg-sel bk">中井</td><td class="bg-sel bk text-end">7</td><td class="rest" colspan="13"></td></tr>
        <tr><th class="rh rh-on">17</th><td class="bg-sel bk text-end dt">11月11日(土)</td><td class="bg-sel bk">高橋</td><td class="bg-sel bk text-end">5</td><td class="rest" colspan="13"></td></tr>
        <tr><th class="rh rh-on">18</th><td class="bg-sel bk text-end dt">11月12日(日)</td><td class="bg-sel bk">田中</td><td class="bg-sel bk text-end">6</td><td class="rest" colspan="13"></td></tr>
        <tr><th class="rh">19</th><td></td><td></td><td></td><td class="rest" colspan="13"></td></tr>
        <tr><th class="rh">20</th><td></td><td></td><td></td><td class="rest" colspan="13"></td></tr>
      </table>
    </div>
    <div class="vscroll">
      <div class="vs-btn"><span class="tri-up"></span></div>
      <div class="vs-thumb"></div>
      <div class="vs-rest"></div>
      <div class="vs-btn vs-end"><span class="tri-dn"></span></div>
    </div>
    <div class="sel-box"></div>
    <div class="step-mark"><div class="step-in">1</div></div>
    <div class="paste-btn">
      <svg width="15" height="18" viewBox="0 0 15 18"><path d="M0 3h10v14H0z" fill="#d9ab66"/><path d="M3 3h4V1H3z" fill="#666"/><path d="M6.500 8.500h5l3 3v6h-8z" fill="#fff" stroke="#666"/></svg>
      <span>(Ctrl)</span><span class="tcaret"></span>
    </div>
  </div>

  <!-- sheet tabs -->
  <div class="stabs d-flex align-items-center palt">
    <div class="stab-nav d-flex align-items-center"><span class="tri-l"></span><span class="tri-r"></span></div>
    <div class="stab-on">セール割引価格表</div>
    <div class="stab-off">スタッフシフト表</div>
    <div class="stab-add"><svg width="16" height="16" viewBox="0 0 16 16" fill="none" stroke="#777"><circle cx="8" cy="8" r="7.200" stroke-width="1.200"/><path d="M8 3.500v9M3.500 8h9" stroke-width="1.800"/></svg></div>
    <div class="dots-h d-flex justify-content-center"><svg width="2" height="11" viewBox="0 0 2 11" fill="#aaa"><path d="M0 0h2v2H0zM0 4.500h2v2H0zM0 9h2v2H0z"/></svg></div>
    <div class="hscroll d-flex">
      <div class="hs-btn"><span class="tri-l"></span></div>
      <div class="hs-thumb"></div>
      <div class="hs-track"></div>
      <div class="hs-gap"></div>
      <div class="hs-btn"><span class="tri-r"></span></div>
    </div>
  </div>

  <!-- status bar -->
  <div class="sbar d-flex align-items-center palt">
    <span>コピー先を選択し、Enter キーを押すか、貼り付けを選択します。</span>
    <div class="stat-right d-flex align-items-center">
      <span class="stat-t">平均: 21526.78571</span>
      <span class="stat-v stat-t">最大値: 43051</span>
      <span class="stat-v stat-t">合計: 301375</span>
      <div class="view-btn view-on"><svg width="14" height="12" viewBox="0 0 14 12" fill="none" stroke="#555"><path d="M.5.500h13v11H.500zM.5 4h13M.5 8h13M5 .5v11M9.500.5v11"/></svg></div>
      <div class="view-btn"><svg width="13" height="13" viewBox="0 0 13 13" fill="none" stroke="#555"><path d="M.5.500h12v12H.500zM3 3.500h7v6H3zM3.500 5.500h6M3.500 7.500h6"/></svg></div>
      <div class="view-btn"><svg width="14" height="12" viewBox="0 0 14 12" fill="none" stroke="#555"><path d="M.5.500h13v11H.500zM.5 8h9V.5"/></svg></div>
      <div class="d-flex align-items-center">
        <span class="sgn">-</span>
        <div class="zoom-track"><div class="zoom-thumb"></div></div>
        <span class="sgn">+</span>
      </div>
      <div class="zoom-val">100%</div>
    </div>
  </div>
</div>
</body>
</html>
